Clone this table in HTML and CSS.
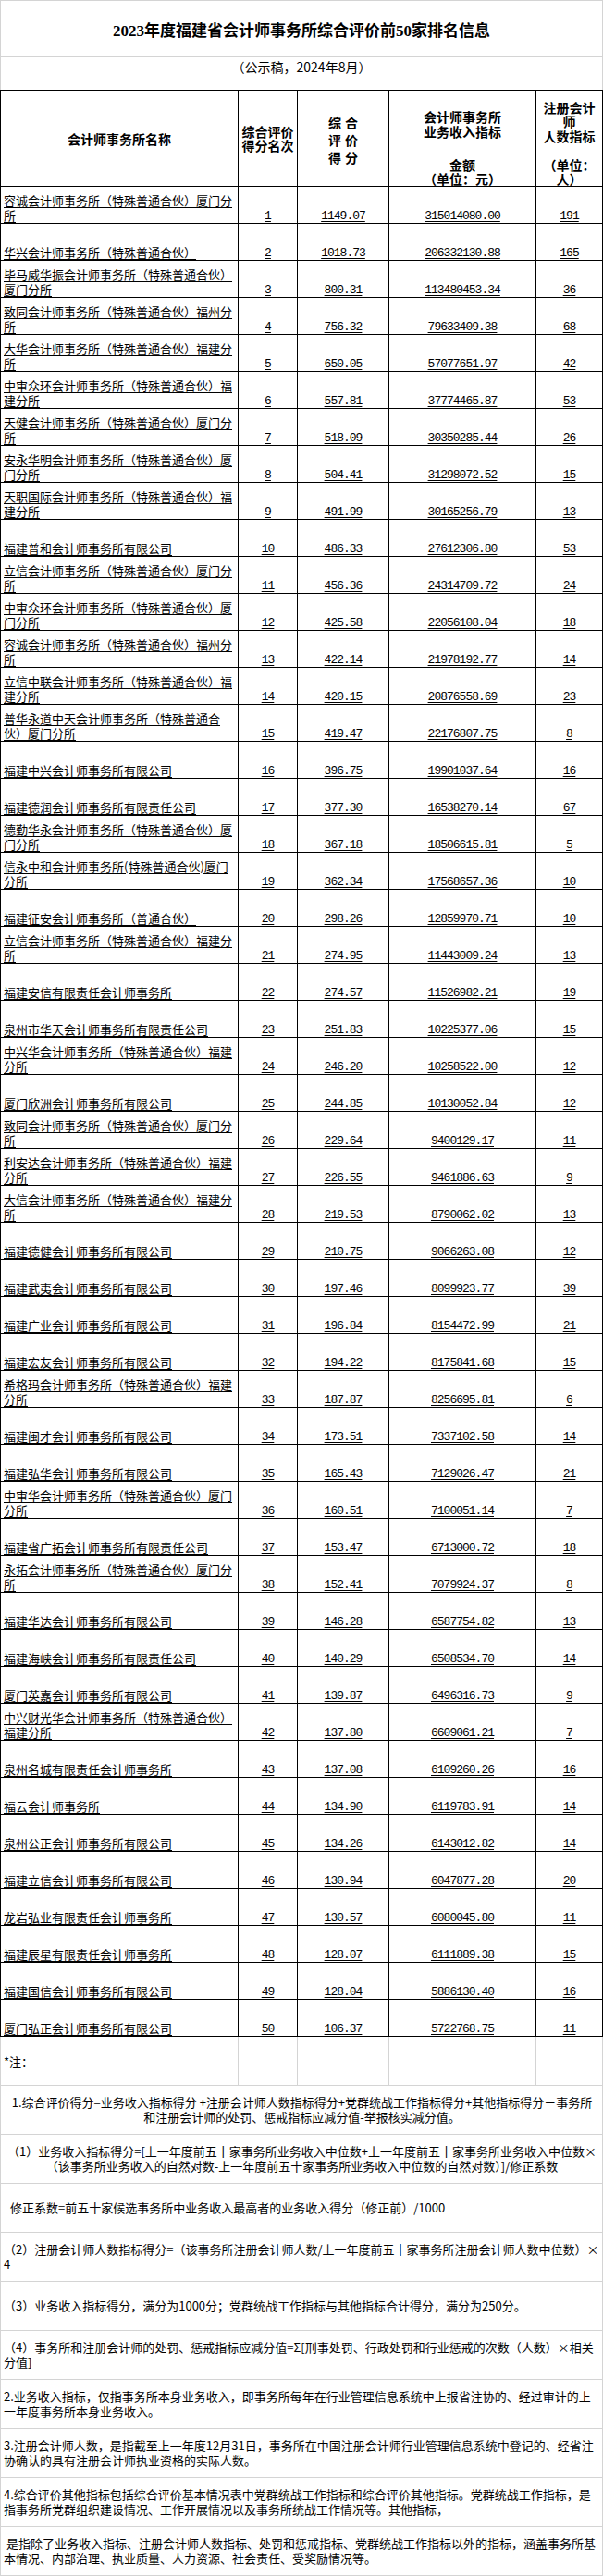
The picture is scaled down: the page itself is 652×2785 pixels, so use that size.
FILE: index.html
```html
<!DOCTYPE html>
<html lang="zh-CN">
<head>
<meta charset="utf-8">
<title>2023年度福建省会计师事务所综合评价前50家排名信息</title>
<link rel="stylesheet" href="styles.css">
</head>
<body>
<div class="sheet">
  <div class="title">2023年度福建省会计师事务所综合评价前50家排名信息</div>
  <div class="subtitle">（公示稿，2024年8月）</div>
  <div class="grid">
    <div class="c h h-span">会计师事务所名称</div>
    <div class="c h h-span h-rank">综合评价<br>得分名次</div>
    <div class="c h h-span h-score">综合<br>评价<br>得分</div>
    <div class="c h h-inc">会计师事务所<br>业务收入指标</div>
    <div class="c h h-cpa">注册会计师<br>人数指标</div>
    <div class="c h h-unit">金额<br>（单位：元）</div>
    <div class="c h h-unit">（单位：人）</div>

    <div class="c d name"><span>容诚会计师事务所（特殊普通合伙）厦门分所</span></div><div class="c d num"><span>1</span></div><div class="c d num"><span>1149.07</span></div><div class="c d num"><span>315014080.00</span></div><div class="c d num"><span>191</span></div>
    <div class="c d name"><span>华兴会计师事务所（特殊普通合伙）</span></div><div class="c d num"><span>2</span></div><div class="c d num"><span>1018.73</span></div><div class="c d num"><span>206332130.88</span></div><div class="c d num"><span>165</span></div>
    <div class="c d name"><span>毕马威华振会计师事务所（特殊普通合伙）厦门分所</span></div><div class="c d num"><span>3</span></div><div class="c d num"><span>800.31</span></div><div class="c d num"><span>113480453.34</span></div><div class="c d num"><span>36</span></div>
    <div class="c d name"><span>致同会计师事务所（特殊普通合伙）福州分所</span></div><div class="c d num"><span>4</span></div><div class="c d num"><span>756.32</span></div><div class="c d num"><span>79633409.38</span></div><div class="c d num"><span>68</span></div>
    <div class="c d name"><span>大华会计师事务所（特殊普通合伙）福建分所</span></div><div class="c d num"><span>5</span></div><div class="c d num"><span>650.05</span></div><div class="c d num"><span>57077651.97</span></div><div class="c d num"><span>42</span></div>
    <div class="c d name"><span>中审众环会计师事务所（特殊普通合伙）福建分所</span></div><div class="c d num"><span>6</span></div><div class="c d num"><span>557.81</span></div><div class="c d num"><span>37774465.87</span></div><div class="c d num"><span>53</span></div>
    <div class="c d name"><span>天健会计师事务所（特殊普通合伙）厦门分所</span></div><div class="c d num"><span>7</span></div><div class="c d num"><span>518.09</span></div><div class="c d num"><span>30350285.44</span></div><div class="c d num"><span>26</span></div>
    <div class="c d name"><span>安永华明会计师事务所（特殊普通合伙）厦门分所</span></div><div class="c d num"><span>8</span></div><div class="c d num"><span>504.41</span></div><div class="c d num"><span>31298072.52</span></div><div class="c d num"><span>15</span></div>
    <div class="c d name"><span>天职国际会计师事务所（特殊普通合伙）福建分所</span></div><div class="c d num"><span>9</span></div><div class="c d num"><span>491.99</span></div><div class="c d num"><span>30165256.79</span></div><div class="c d num"><span>13</span></div>
    <div class="c d name"><span>福建普和会计师事务所有限公司</span></div><div class="c d num"><span>10</span></div><div class="c d num"><span>486.33</span></div><div class="c d num"><span>27612306.80</span></div><div class="c d num"><span>53</span></div>
    <div class="c d name"><span>立信会计师事务所（特殊普通合伙）厦门分所</span></div><div class="c d num"><span>11</span></div><div class="c d num"><span>456.36</span></div><div class="c d num"><span>24314709.72</span></div><div class="c d num"><span>24</span></div>
    <div class="c d name"><span>中审众环会计师事务所（特殊普通合伙）厦门分所</span></div><div class="c d num"><span>12</span></div><div class="c d num"><span>425.58</span></div><div class="c d num"><span>22056108.04</span></div><div class="c d num"><span>18</span></div>
    <div class="c d name"><span>容诚会计师事务所（特殊普通合伙）福州分所</span></div><div class="c d num"><span>13</span></div><div class="c d num"><span>422.14</span></div><div class="c d num"><span>21978192.77</span></div><div class="c d num"><span>14</span></div>
    <div class="c d name"><span>立信中联会计师事务所（特殊普通合伙）福建分所</span></div><div class="c d num"><span>14</span></div><div class="c d num"><span>420.15</span></div><div class="c d num"><span>20876558.69</span></div><div class="c d num"><span>23</span></div>
    <div class="c d name"><span>普华永道中天会计师事务所（特殊普通合伙）厦门分所</span></div><div class="c d num"><span>15</span></div><div class="c d num"><span>419.47</span></div><div class="c d num"><span>22176807.75</span></div><div class="c d num"><span>8</span></div>
    <div class="c d name"><span>福建中兴会计师事务所有限公司</span></div><div class="c d num"><span>16</span></div><div class="c d num"><span>396.75</span></div><div class="c d num"><span>19901037.64</span></div><div class="c d num"><span>16</span></div>
    <div class="c d name"><span>福建德润会计师事务所有限责任公司</span></div><div class="c d num"><span>17</span></div><div class="c d num"><span>377.30</span></div><div class="c d num"><span>16538270.14</span></div><div class="c d num"><span>67</span></div>
    <div class="c d name"><span>德勤华永会计师事务所（特殊普通合伙）厦门分所</span></div><div class="c d num"><span>18</span></div><div class="c d num"><span>367.18</span></div><div class="c d num"><span>18506615.81</span></div><div class="c d num"><span>5</span></div>
    <div class="c d name"><span>信永中和会计师事务所(特殊普通合伙)厦门分所</span></div><div class="c d num"><span>19</span></div><div class="c d num"><span>362.34</span></div><div class="c d num"><span>17568657.36</span></div><div class="c d num"><span>10</span></div>
    <div class="c d name"><span>福建征安会计师事务所（普通合伙）</span></div><div class="c d num"><span>20</span></div><div class="c d num"><span>298.26</span></div><div class="c d num"><span>12859970.71</span></div><div class="c d num"><span>10</span></div>
    <div class="c d name"><span>立信会计师事务所（特殊普通合伙）福建分所</span></div><div class="c d num"><span>21</span></div><div class="c d num"><span>274.95</span></div><div class="c d num"><span>11443009.24</span></div><div class="c d num"><span>13</span></div>
    <div class="c d name"><span>福建安信有限责任会计师事务所</span></div><div class="c d num"><span>22</span></div><div class="c d num"><span>274.57</span></div><div class="c d num"><span>11526982.21</span></div><div class="c d num"><span>19</span></div>
    <div class="c d name"><span>泉州市华天会计师事务所有限责任公司</span></div><div class="c d num"><span>23</span></div><div class="c d num"><span>251.83</span></div><div class="c d num"><span>10225377.06</span></div><div class="c d num"><span>15</span></div>
    <div class="c d name"><span>中兴华会计师事务所（特殊普通合伙）福建分所</span></div><div class="c d num"><span>24</span></div><div class="c d num"><span>246.20</span></div><div class="c d num"><span>10258522.00</span></div><div class="c d num"><span>12</span></div>
    <div class="c d name"><span>厦门欣洲会计师事务所有限公司</span></div><div class="c d num"><span>25</span></div><div class="c d num"><span>244.85</span></div><div class="c d num"><span>10130052.84</span></div><div class="c d num"><span>12</span></div>
    <div class="c d name"><span>致同会计师事务所（特殊普通合伙）厦门分所</span></div><div class="c d num"><span>26</span></div><div class="c d num"><span>229.64</span></div><div class="c d num"><span>9400129.17</span></div><div class="c d num"><span>11</span></div>
    <div class="c d name"><span>利安达会计师事务所（特殊普通合伙）福建分所</span></div><div class="c d num"><span>27</span></div><div class="c d num"><span>226.55</span></div><div class="c d num"><span>9461886.63</span></div><div class="c d num"><span>9</span></div>
    <div class="c d name"><span>大信会计师事务所（特殊普通合伙）福建分所</span></div><div class="c d num"><span>28</span></div><div class="c d num"><span>219.53</span></div><div class="c d num"><span>8790062.02</span></div><div class="c d num"><span>13</span></div>
    <div class="c d name"><span>福建德健会计师事务所有限公司</span></div><div class="c d num"><span>29</span></div><div class="c d num"><span>210.75</span></div><div class="c d num"><span>9066263.08</span></div><div class="c d num"><span>12</span></div>
    <div class="c d name"><span>福建武夷会计师事务所有限公司</span></div><div class="c d num"><span>30</span></div><div class="c d num"><span>197.46</span></div><div class="c d num"><span>8099923.77</span></div><div class="c d num"><span>39</span></div>
    <div class="c d name"><span>福建广业会计师事务所有限公司</span></div><div class="c d num"><span>31</span></div><div class="c d num"><span>196.84</span></div><div class="c d num"><span>8154472.99</span></div><div class="c d num"><span>21</span></div>
    <div class="c d name"><span>福建宏友会计师事务所有限公司</span></div><div class="c d num"><span>32</span></div><div class="c d num"><span>194.22</span></div><div class="c d num"><span>8175841.68</span></div><div class="c d num"><span>15</span></div>
    <div class="c d name"><span>希格玛会计师事务所（特殊普通合伙）福建分所</span></div><div class="c d num"><span>33</span></div><div class="c d num"><span>187.87</span></div><div class="c d num"><span>8256695.81</span></div><div class="c d num"><span>6</span></div>
    <div class="c d name"><span>福建闽才会计师事务所有限公司</span></div><div class="c d num"><span>34</span></div><div class="c d num"><span>173.51</span></div><div class="c d num"><span>7337102.58</span></div><div class="c d num"><span>14</span></div>
    <div class="c d name"><span>福建弘华会计师事务所有限公司</span></div><div class="c d num"><span>35</span></div><div class="c d num"><span>165.43</span></div><div class="c d num"><span>7129026.47</span></div><div class="c d num"><span>21</span></div>
    <div class="c d name"><span>中审华会计师事务所（特殊普通合伙）厦门分所</span></div><div class="c d num"><span>36</span></div><div class="c d num"><span>160.51</span></div><div class="c d num"><span>7100051.14</span></div><div class="c d num"><span>7</span></div>
    <div class="c d name"><span>福建省广拓会计师事务所有限责任公司</span></div><div class="c d num"><span>37</span></div><div class="c d num"><span>153.47</span></div><div class="c d num"><span>6713000.72</span></div><div class="c d num"><span>18</span></div>
    <div class="c d name"><span>永拓会计师事务所（特殊普通合伙）厦门分所</span></div><div class="c d num"><span>38</span></div><div class="c d num"><span>152.41</span></div><div class="c d num"><span>7079924.37</span></div><div class="c d num"><span>8</span></div>
    <div class="c d name"><span>福建华达会计师事务所有限公司</span></div><div class="c d num"><span>39</span></div><div class="c d num"><span>146.28</span></div><div class="c d num"><span>6587754.82</span></div><div class="c d num"><span>13</span></div>
    <div class="c d name"><span>福建海峡会计师事务所有限责任公司</span></div><div class="c d num"><span>40</span></div><div class="c d num"><span>140.29</span></div><div class="c d num"><span>6508534.70</span></div><div class="c d num"><span>14</span></div>
    <div class="c d name"><span>厦门英嘉会计师事务所有限公司</span></div><div class="c d num"><span>41</span></div><div class="c d num"><span>139.87</span></div><div class="c d num"><span>6496316.73</span></div><div class="c d num"><span>9</span></div>
    <div class="c d name"><span>中兴财光华会计师事务所（特殊普通合伙）福建分所</span></div><div class="c d num"><span>42</span></div><div class="c d num"><span>137.80</span></div><div class="c d num"><span>6609061.21</span></div><div class="c d num"><span>7</span></div>
    <div class="c d name"><span>泉州名城有限责任会计师事务所</span></div><div class="c d num"><span>43</span></div><div class="c d num"><span>137.08</span></div><div class="c d num"><span>6109260.26</span></div><div class="c d num"><span>16</span></div>
    <div class="c d name"><span>福云会计师事务所</span></div><div class="c d num"><span>44</span></div><div class="c d num"><span>134.90</span></div><div class="c d num"><span>6119783.91</span></div><div class="c d num"><span>14</span></div>
    <div class="c d name"><span>泉州公正会计师事务所有限公司</span></div><div class="c d num"><span>45</span></div><div class="c d num"><span>134.26</span></div><div class="c d num"><span>6143012.82</span></div><div class="c d num"><span>14</span></div>
    <div class="c d name"><span>福建立信会计师事务所有限公司</span></div><div class="c d num"><span>46</span></div><div class="c d num"><span>130.94</span></div><div class="c d num"><span>6047877.28</span></div><div class="c d num"><span>20</span></div>
    <div class="c d name"><span>龙岩弘业有限责任会计师事务所</span></div><div class="c d num"><span>47</span></div><div class="c d num"><span>130.57</span></div><div class="c d num"><span>6080045.80</span></div><div class="c d num"><span>11</span></div>
    <div class="c d name"><span>福建辰星有限责任会计师事务所</span></div><div class="c d num"><span>48</span></div><div class="c d num"><span>128.07</span></div><div class="c d num"><span>6111889.38</span></div><div class="c d num"><span>15</span></div>
    <div class="c d name"><span>福建国信会计师事务所有限公司</span></div><div class="c d num"><span>49</span></div><div class="c d num"><span>128.04</span></div><div class="c d num"><span>5886130.40</span></div><div class="c d num"><span>16</span></div>
    <div class="c d name"><span>厦门弘正会计师事务所有限公司</span></div><div class="c d num"><span>50</span></div><div class="c d num"><span>106.37</span></div><div class="c d num"><span>5722768.75</span></div><div class="c d num"><span>11</span></div>
  </div>
  <div class="zrow">
    <div class="z z-label">*注：</div><div class="z"></div><div class="z"></div><div class="z"></div><div class="z"></div>
  </div>
  <div class="note center">1.综合评价得分=业务收入指标得分 +注册会计师人数指标得分+党群统战工作指标得分+其他指标得分－事务所<br>和注册会计师的处罚、惩戒指标应减分值-举报核实减分值。</div>
  <div class="note center">（1）业务收入指标得分=[上一年度前五十家事务所业务收入中位数+上一年度前五十家事务所业务收入中位数×<br>（该事务所业务收入的自然对数-上一年度前五十家事务所业务收入中位数的自然对数）]/修正系数</div>
  <div class="note indent">修正系数=前五十家候选事务所中业务收入最高者的业务收入得分（修正前）/1000</div>
  <div class="note">（2）注册会计师人数指标得分=（该事务所注册会计师人数/上一年度前五十家事务所注册会计师人数中位数）×<br>4</div>
  <div class="note">（3）业务收入指标得分，满分为1000分；党群统战工作指标与其他指标合计得分，满分为250分。</div>
  <div class="note">（4）事务所和注册会计师的处罚、惩戒指标应减分值=Σ[刑事处罚、行政处罚和行业惩戒的次数（人数）×相关<br>分值]</div>
  <div class="note">2.业务收入指标，仅指事务所本身业务收入，即事务所每年在行业管理信息系统中上报省注协的、经过审计的上<br>一年度事务所本身业务收入。</div>
  <div class="note">3.注册会计师人数，是指截至上一年度12月31日，事务所在中国注册会计师行业管理信息系统中登记的、经省注<br>协确认的具有注册会计师执业资格的实际人数。</div>
  <div class="note">4.综合评价其他指标包括综合评价基本情况表中党群统战工作指标和综合评价其他指标。党群统战工作指标，是<br>指事务所党群组织建设情况、工作开展情况以及事务所统战工作情况等。其他指标，</div>
  <div class="note">&nbsp;是指除了业务收入指标、注册会计师人数指标、处罚和惩戒指标、党群统战工作指标以外的指标，涵盖事务所基<br>本情况、内部治理、执业质量、人力资源、社会责任、受奖励情况等。</div>
</div>
</body>
</html>
```

FILE: styles.css
```css
* {
  box-sizing: border-box;
  margin: 0;
  padding: 0;
}

body {
  margin: 0;
  background: #ffffff;
  color: #000000;
  font-family: "Noto Sans CJK SC", sans-serif;
  font-size: 13px;
}

.sheet {
  width: 652px;
}

.title {
  height: 62px;
  border: 1px solid #d4d4d4;
  display: flex;
  align-items: center;
  justify-content: center;
  font-family: "Liberation Serif", "Noto Sans CJK SC", serif;
  font-size: 17px;
  font-weight: bold;
}

.subtitle {
  height: 35px;
  border-left: 1px solid #d4d4d4;
  border-right: 1px solid #d4d4d4;
  display: flex;
  justify-content: center;
  align-items: flex-start;
  font-size: 14px;
  line-height: 20px;
}

.grid {
  display: grid;
  grid-template-columns: 257px 64px 99px 159px 72px;
  grid-template-rows: 69px 35px;
  grid-auto-rows: 40px;
  border-top: 1px solid #000;
  border-left: 1px solid #000;
}

.c {
  border-right: 1px solid #000;
  border-bottom: 1px solid #000;
}

.h {
  display: flex;
  align-items: center;
  justify-content: center;
  text-align: center;
  padding: 0 3px;
  font-size: 14px;
  font-weight: bold;
  line-height: 16px;
}

.h-span {
  grid-row: span 2;
}

.h-rank {
  line-height: 15px;
}

.h-score {
  line-height: 19px;
  letter-spacing: 4px;
  padding-top: 4px;
  padding-left: 7px;
}

.h-inc {
  padding-top: 3px;
}

.h-cpa {
  line-height: 15.5px;
}

.h-unit {
  line-height: 15px;
  padding-top: 3px;
}

.d {
  display: flex;
  align-items: flex-end;
  line-height: 16px;
}

.d span {
  text-decoration: underline;
  text-underline-offset: 2px;
}

.name {
  padding-left: 3px;
}

.num {
  justify-content: center;
  font-family: "Liberation Mono", monospace;
  font-size: 13px;
  letter-spacing: -1px;
  line-height: 14px;
}

.zrow {
  display: grid;
  grid-template-columns: 257px 64px 99px 159px 72px;
  height: 53px;
  border-left: 1px solid #d4d4d4;
}

.z {
  border-right: 1px solid #d4d4d4;
  border-bottom: 1px solid #d4d4d4;
}

.z-label {
  display: flex;
  align-items: center;
  padding-left: 3px;
}

.note {
  height: 53px;
  border-left: 1px solid #d4d4d4;
  border-right: 1px solid #d4d4d4;
  border-bottom: 1px solid #d4d4d4;
  display: flex;
  align-items: center;
  padding: 0 2px 0 3px;
  line-height: 16px;
}

.center {
  justify-content: center;
  text-align: center;
}

.indent {
  padding-left: 10px;
}
```
